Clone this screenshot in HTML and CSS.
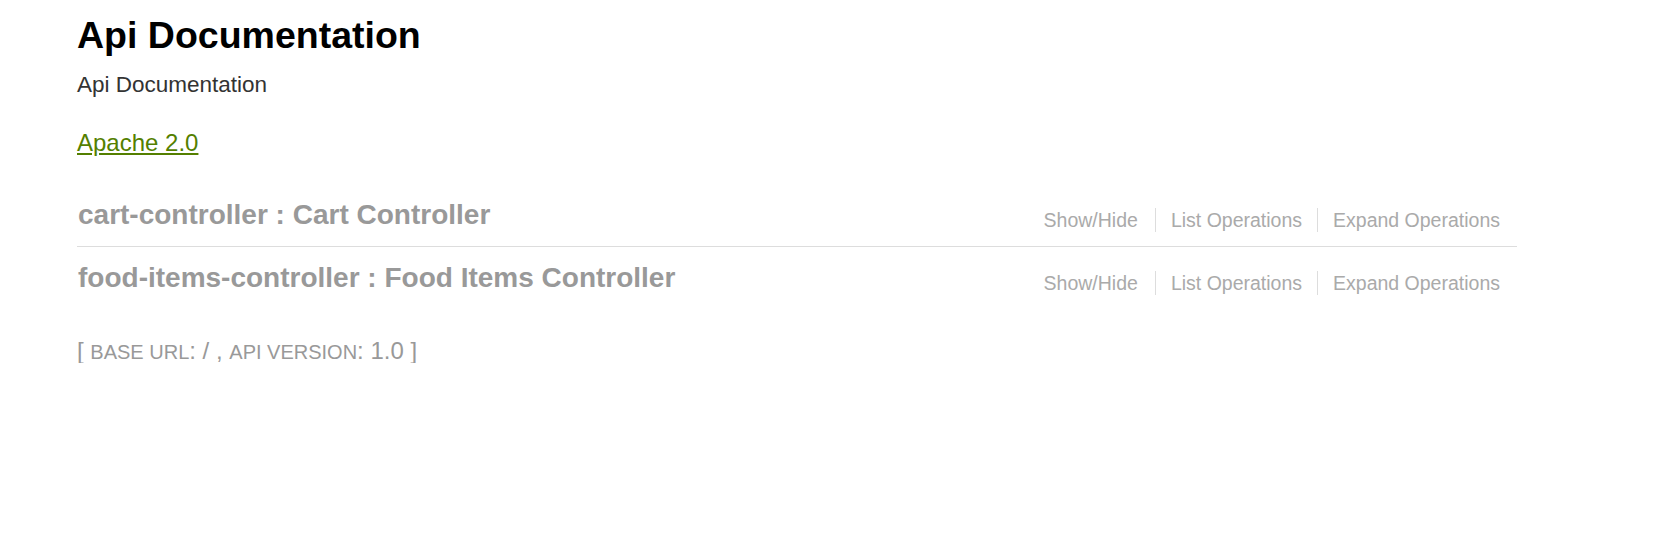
FILE: index.html
```html
<!DOCTYPE html>
<html>
<head>
<meta charset="utf-8">
<title>Swagger UI</title>
<link rel="stylesheet" href="styles.css">
</head>
<body>
<div class="wrap">
  <div class="info">
    <div class="info-title">Api Documentation</div>
    <div class="info-desc">Api Documentation</div>
    <div class="info-license"><a href="#">Apache 2.0</a></div>
  </div>
  <ul class="resources">
    <li class="resource">
      <div class="heading">
        <h2><a href="#">cart-controller : Cart Controller</a></h2>
        <ul class="options">
          <li><a href="#">Show/Hide</a></li>
          <li><a href="#">List Operations</a></li>
          <li><a href="#">Expand Operations</a></li>
        </ul>
      </div>
    </li>
    <li class="resource">
      <div class="heading">
        <h2><a href="#">food-items-controller : Food Items Controller</a></h2>
        <ul class="options">
          <li><a href="#">Show/Hide</a></li>
          <li><a href="#">List Operations</a></li>
          <li><a href="#">Expand Operations</a></li>
        </ul>
      </div>
    </li>
  </ul>
  <div class="footer">
    <h4>[ <span class="sc">base url</span>: / , <span class="sc">api version</span>: 1.0 ]</h4>
  </div>
</div>
</body>
</html>
```
FILE: styles.css
```css
html, body {
  margin: 0;
  padding: 0;
  background: #fff;
}
body {
  font-family: "Liberation Sans", Arial, sans-serif;
}
.wrap {
  width: 1440px;
  margin-left: 77px;
  padding-top: 17px;
  line-height: 1;
}
.info-title {
  font-size: 37.5px;
  font-weight: bold;
  color: #000;
  margin-bottom: 19px;
}
.info-desc {
  font-size: 22.5px;
  color: #333;
  margin-bottom: 35px;
}
.info-license {
  font-size: 24px;
  margin-bottom: 29px;
}
.info-license a {
  color: #547f00;
  text-decoration: underline;
}
.resources {
  list-style: none;
  margin: 0;
  padding: 0;
}
.resource {
  border-bottom: 1px solid #ddd;
}
.resource:last-child {
  border-bottom: none;
}
.heading {
  display: flex;
  justify-content: space-between;
  align-items: flex-start;
  padding: 17px 0 14px;
}
.heading h2 {
  margin: 0;
  font-size: 28px;
  font-weight: bold;
  line-height: 1;
  padding-left: 1px;
}
.heading h2 a {
  color: #999;
  text-decoration: none;
}
.options {
  list-style: none;
  display: flex;
  margin: 7px 2px 0 0;
  padding: 0;
}
.options li {
  font-size: 19.5px;
  line-height: 18px;
  padding: 3px 15px;
  border-right: 1px solid #ddd;
}
.options li:first-child {
  padding-right: 17px;
}
.options li:last-child {
  border-right: none;
}
.options li a {
  color: #aaa;
  text-decoration: none;
}
.footer {
  margin-top: 30px;
}
.footer h4 {
  margin: 0;
  font-size: 24px;
  font-weight: normal;
  color: #999;
  line-height: 1;
}
.sc {
  text-transform: uppercase;
  font-size: 20px;
}
```
